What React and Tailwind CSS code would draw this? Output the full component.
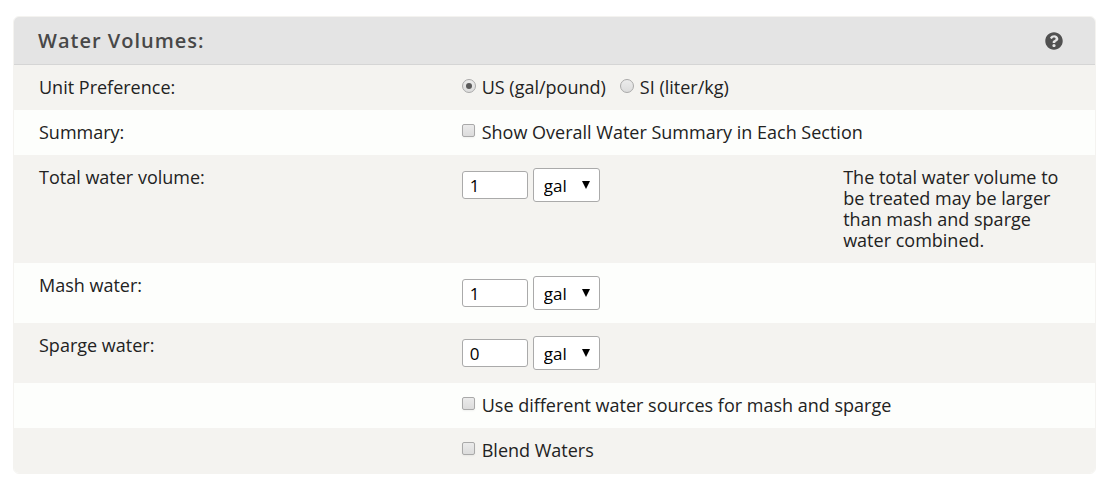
import { useState } from 'react';
import { FaQuestionCircle } from 'react-icons/fa';

const UNITS = ['gal', 'qt', 'L'];

function Row({ label, htmlFor, hint, shaded, children }) {
  return (
    <div
      className={`grid grid-cols-[41%_37%_1fr] px-[25px] py-3 ${
        shaded ? 'bg-[#f4f3f0]' : 'bg-[#fdfefc]'
      }`}
    >
      <div>{label && (htmlFor ? <label htmlFor={htmlFor}>{label}</label> : label)}</div>
      <div className="whitespace-nowrap">{children}</div>
      <div>{hint}</div>
    </div>
  );
}

function Checkbox({ id, label, checked, onChange }) {
  return (
    <div className="flex items-start gap-[7px]">
      <input
        id={id}
        type="checkbox"
        checked={checked}
        onChange={(e) => onChange(e.target.checked)}
        className="mt-0.5 size-[13px] shrink-0 appearance-none rounded-xs border border-[#a9a9a9] bg-linear-to-b from-[#ebebeb] to-[#dcdcdc] shadow-xs checked:from-[#666] checked:to-[#555]"
      />
      <label htmlFor={id}>{label}</label>
    </div>
  );
}

function UnitRadio({ id, label, value, current, onChange }) {
  return (
    <div className="flex items-start gap-1.5">
      <input
        id={id}
        type="radio"
        name="unitPreference"
        value={value}
        checked={current === value}
        onChange={() => onChange(value)}
        className="mt-0.5 grid size-[14px] shrink-0 appearance-none place-items-center rounded-full border border-[#a9a9a9] bg-linear-to-b from-[#ececec] to-[#dcdcdc] before:size-1.5 before:rounded-full checked:before:bg-[#5a5a5a]"
      />
      <label htmlFor={id}>{label}</label>
    </div>
  );
}

function VolumeField({ id, label, initial }) {
  const [amount, setAmount] = useState(initial);
  const [unit, setUnit] = useState('gal');

  return (
    <div className="flex h-9 items-center gap-[5px]">
      <input
        id={id}
        type="text"
        value={amount}
        onChange={(e) => setAmount(e.target.value)}
        className="h-7 w-[66px] rounded-[3px] border border-[#aaa] bg-white px-[7px] text-[17px] text-black"
      />
      <div className="relative">
        <select
          aria-label={`${label} unit`}
          value={unit}
          onChange={(e) => setUnit(e.target.value)}
          className="block h-[34px] w-[67px] appearance-none rounded-[3px] border border-[#aaa] bg-white pl-2.5 text-[17px] text-black"
        >
          {UNITS.map((u) => (
            <option key={u} value={u}>
              {u}
            </option>
          ))}
        </select>
        <svg
          className="pointer-events-none absolute top-[13px] right-2.5 h-2 w-2"
          viewBox="0 0 8 8"
          aria-hidden="true"
        >
          <path d="M0 0h8L4 8z" fill="#000" />
        </svg>
      </div>
    </div>
  );
}

export default function App() {
  const [units, setUnits] = useState('us');
  const [showSummary, setShowSummary] = useState(false);
  const [differentSources, setDifferentSources] = useState(false);
  const [blend, setBlend] = useState(false);

  return (
    <main className="px-[13px] py-4 font-['Open_Sans',sans-serif] text-[18px] leading-[21px] text-[#222]">
      <form
        className="overflow-hidden rounded-md border border-[#f4f3f0]"
        onSubmit={(e) => e.preventDefault()}
      >
        <div className="flex h-12 items-center justify-between border-b border-[#d5d5d5] bg-[#e4e4e4] pr-8 pl-6 text-[#484848]">
          <h2 className="text-xl font-semibold tracking-[1px]">Water Volumes:</h2>
          <button type="button" aria-label="Help with water volumes" className="text-[#505050]">
            <FaQuestionCircle className="size-[18px]" />
          </button>
        </div>

        <Row label="Unit Preference:" shaded>
          <div role="radiogroup" aria-label="Unit Preference" className="flex gap-3.5">
            <UnitRadio
              id="units-us"
              label="US (gal/pound)"
              value="us"
              current={units}
              onChange={setUnits}
            />
            <UnitRadio
              id="units-si"
              label="SI (liter/kg)"
              value="si"
              current={units}
              onChange={setUnits}
            />
          </div>
        </Row>

        <Row label="Summary:">
          <Checkbox
            id="show-summary"
            label="Show Overall Water Summary in Each Section"
            checked={showSummary}
            onChange={setShowSummary}
          />
        </Row>

        <Row
          label="Total water volume:"
          htmlFor="total-water"
          hint="The total water volume to be treated may be larger than mash and sparge water combined."
          shaded
        >
          <VolumeField id="total-water" label="Total water volume" initial="1" />
        </Row>

        <Row label="Mash water:" htmlFor="mash-water">
          <VolumeField id="mash-water" label="Mash water" initial="1" />
        </Row>

        <Row label="Sparge water:" htmlFor="sparge-water" shaded>
          <VolumeField id="sparge-water" label="Sparge water" initial="0" />
        </Row>

        <Row>
          <Checkbox
            id="different-sources"
            label="Use different water sources for mash and sparge"
            checked={differentSources}
            onChange={setDifferentSources}
          />
        </Row>

        <Row shaded>
          <Checkbox id="blend-waters" label="Blend Waters" checked={blend} onChange={setBlend} />
        </Row>
      </form>
    </main>
  );
}
